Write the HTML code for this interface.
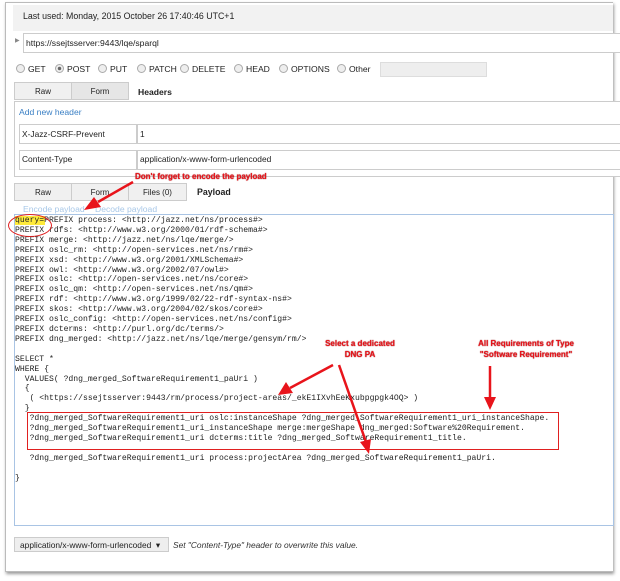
<!DOCTYPE html>
<html><head><style>
body{margin:0;width:620px;height:581px;background:#fff;position:relative;overflow:hidden;font-family:"Liberation Sans",sans-serif;font-size:8.5px;color:#222}
.a{position:absolute;white-space:nowrap}
.box{position:absolute;border:1px solid #ccc;background:#fff}
.tab{position:absolute;border:1px solid #ccc;background:#f0f0f0;text-align:center;line-height:17px;font-size:8px;box-sizing:border-box}
.rad{display:inline-block;width:7px;height:7px;border:1px solid #aaa;border-radius:50%;background:#eee;vertical-align:-1px;margin-right:3px}
pre.a{margin:0;font-family:"Liberation Mono",monospace;font-size:8.1px;line-height:9.9px;color:#222;white-space:pre}
.red{color:#e8141b;font-weight:bold;font-size:8px;text-shadow:0 0 1px #800}
.rl{position:absolute;top:64px;font-size:8.6px;white-space:nowrap}
</style></head><body>
<div class="a" style="left:5px;top:2px;width:607px;height:568px;border:1px solid #bbb;border-right:none;box-shadow:1px 2px 3px #999"></div>
<div class="a" style="left:13px;top:5px;width:600px;height:26px;background:#f2f2f2"></div>
<div class="a" style="left:23px;top:11px;font-size:8.8px">Last used: Monday, 2015 October 26 17:40:46 UTC+1</div>
<div class="a" style="left:15px;top:37px;font-size:6px;color:#888">▶</div>
<div class="box" style="left:23px;top:33px;width:600px;height:18px"></div>
<div class="a" style="left:26px;top:38px;font-size:8.6px">https://ssejtsserver:9443/lqe/sparql</div>
<div class="rl" style="left:16px"><span class="rad"></span>GET</div>
<div class="rl" style="left:55px"><span class="rad" style="background:radial-gradient(#666 30%,#eee 40%)"></span>POST</div>
<div class="rl" style="left:98px"><span class="rad"></span>PUT</div>
<div class="rl" style="left:137px"><span class="rad"></span>PATCH</div>
<div class="rl" style="left:180px"><span class="rad"></span>DELETE</div>
<div class="rl" style="left:234px"><span class="rad"></span>HEAD</div>
<div class="rl" style="left:279px"><span class="rad"></span>OPTIONS</div>
<div class="rl" style="left:337px"><span class="rad"></span>Other</div>
<div class="a" style="left:380px;top:62px;width:105px;height:13px;background:#eee;border:1px solid #ddd"></div>
<div class="tab" style="left:14px;top:82px;width:58px;height:18px">Raw</div>
<div class="tab" style="left:71px;top:82px;width:58px;height:18px;background:#e6e6e6">Form</div>
<div class="a" style="left:138px;top:87px;font-weight:bold;font-size:8.6px">Headers</div>
<div class="box" style="left:14px;top:101px;width:610px;height:74px"></div>
<div class="a" style="left:19px;top:107px;color:#3a7fc4;font-size:8.6px">Add new header</div>
<div class="box" style="left:19px;top:124px;width:116px;height:18px"></div>
<div class="a" style="left:22px;top:129px;font-size:8.4px">X-Jazz-CSRF-Prevent</div>
<div class="box" style="left:137px;top:124px;width:490px;height:18px"></div>
<div class="a" style="left:140px;top:129px;font-size:8.4px">1</div>
<div class="box" style="left:19px;top:150px;width:116px;height:18px"></div>
<div class="a" style="left:22px;top:154px;font-size:8.4px">Content-Type</div>
<div class="box" style="left:137px;top:150px;width:490px;height:18px"></div>
<div class="a" style="left:140px;top:154px;font-size:8.4px">application/x-www-form-urlencoded</div>
<div class="tab" style="left:14px;top:183px;width:58px;height:18px">Raw</div>
<div class="tab" style="left:71px;top:183px;width:58px;height:18px">Form</div>
<div class="tab" style="left:128px;top:183px;width:59px;height:18px">Files (0)</div>
<div class="a" style="left:197px;top:187px;font-weight:bold;font-size:8.8px">Payload</div>
<div class="a" style="left:23px;top:204px;color:#a8c8e8;font-size:8.6px">Encode payload</div>
<div class="a" style="left:95px;top:204px;color:#a8c8e8;font-size:8.6px">Decode payload</div>
<div class="a" style="left:14px;top:214px;width:598px;height:310px;border:1px solid #a9c4e4"></div>
<div class="a" style="left:15px;top:216px;width:30px;height:9px;background:#ffeb3b"></div>
<pre class="a" style="left:15px;top:216px">query=PREFIX process: &lt;http://jazz.net/ns/process#&gt;
PREFIX rdfs: &lt;http://www.w3.org/2000/01/rdf-schema#&gt;
PREFIX merge: &lt;http://jazz.net/ns/lqe/merge/&gt;
PREFIX oslc_rm: &lt;http://open-services.net/ns/rm#&gt;
PREFIX xsd: &lt;http://www.w3.org/2001/XMLSchema#&gt;
PREFIX owl: &lt;http://www.w3.org/2002/07/owl#&gt;
PREFIX oslc: &lt;http://open-services.net/ns/core#&gt;
PREFIX oslc_qm: &lt;http://open-services.net/ns/qm#&gt;
PREFIX rdf: &lt;http://www.w3.org/1999/02/22-rdf-syntax-ns#&gt;
PREFIX skos: &lt;http://www.w3.org/2004/02/skos/core#&gt;
PREFIX oslc_config: &lt;http://open-services.net/ns/config#&gt;
PREFIX dcterms: &lt;http://purl.org/dc/terms/&gt;
PREFIX dng_merged: &lt;http://jazz.net/ns/lqe/merge/gensym/rm/&gt;

SELECT *
WHERE {
  VALUES( ?dng_merged_SoftwareRequirement1_paUri )
  {
   ( &lt;https://ssejtsserver:9443/rm/process/project-areas/_ekE1IXvhEeKxubpgpgk4OQ&gt; )
  }
   ?dng_merged_SoftwareRequirement1_uri oslc:instanceShape ?dng_merged_SoftwareRequirement1_uri_instanceShape.
   ?dng_merged_SoftwareRequirement1_uri_instanceShape merge:mergeShape dng_merged:Software%20Requirement.
   ?dng_merged_SoftwareRequirement1_uri dcterms:title ?dng_merged_SoftwareRequirement1_title.

   ?dng_merged_SoftwareRequirement1_uri process:projectArea ?dng_merged_SoftwareRequirement1_paUri.

}</pre>
<div class="a" style="left:27px;top:412px;width:530px;height:36px;border:1.5px solid #e02020"></div>
<div class="a" style="left:8px;top:214px;width:42px;height:21px;border:1.5px solid #e02020;border-radius:50%"></div>
<div class="a red" style="left:135px;top:172px">Don't forget to encode the payload</div>
<div class="a red" style="left:318px;top:338px;width:84px;text-align:center;line-height:11px">Select a dedicated<br>DNG PA</div>
<div class="a red" style="left:470px;top:338px;width:112px;text-align:center;line-height:11px">All Requirements of Type<br>"Software Requirement"</div>
<svg class="a" style="left:0;top:0" width="620" height="581">
<g stroke="#e8141b" stroke-width="2.5" fill="#e8141b">
<line x1="133" y1="182" x2="98" y2="202"/><polygon points="84,210 94,197 101,207" stroke="none"/>
<line x1="333" y1="365" x2="290" y2="388"/><polygon points="278,395 286,382 293,393" stroke="none"/>
<line x1="339" y1="365" x2="366" y2="442"/><polygon points="369,454 360,442 371,439" stroke="none"/>
<line x1="490" y1="366" x2="490" y2="398"/><polygon points="490,410 484,397 496,397" stroke="none"/>
</g></svg>
<div class="a" style="left:14px;top:537px;width:155px;height:15px;background:#eee;border:1px solid #ccc;font-size:8.4px;line-height:15px;padding-left:5px;box-sizing:border-box">application/x-www-form-urlencoded &nbsp;▾</div>
<div class="a" style="left:173px;top:540px;font-size:8.4px;font-style:italic;color:#333">Set "Content-Type" header to overwrite this value.</div>
</body></html>
